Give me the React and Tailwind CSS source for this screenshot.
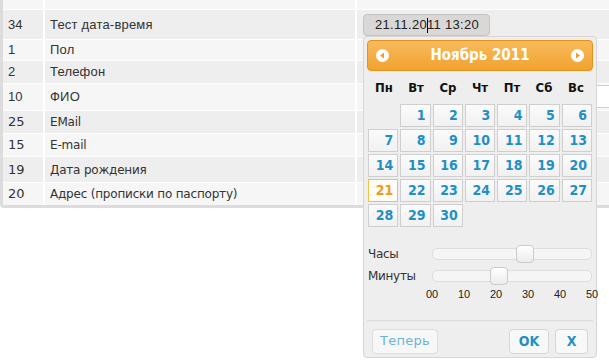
import React from 'react'

const rows = [
  { id: '', label: '', h: 'h-[9px]', bg: 'bg-[#f6f6f6]' },
  { id: '34', label: 'Тест дата-время', h: 'h-[29px]', bg: 'bg-[#eeeeee]', picker: true },
  { id: '1', label: 'Пол', h: 'h-[20px]', bg: 'bg-[#f6f6f6]' },
  { id: '2', label: 'Телефон', h: 'h-[22px]', bg: 'bg-[#eeeeee]' },
  { id: '10', label: 'ФИО', h: 'h-[26px]', bg: 'bg-[#f6f6f6]', input: true },
  { id: '25', label: 'EMail', h: 'h-[22px]', bg: 'bg-[#eeeeee]', alt: true },
  { id: '15', label: 'E-mail', h: 'h-[22px]', bg: 'bg-[#f6f6f6]', alt: true },
  { id: '19', label: 'Дата рождения', h: 'h-[25px]', bg: 'bg-[#eeeeee]', alt: true },
  { id: '20', label: 'Адрес (прописки по паспорту)', h: 'h-[22px]', bg: 'bg-[#f6f6f6]', alt: true },
]

const dayNames = ['Пн', 'Вт', 'Ср', 'Чт', 'Пт', 'Сб', 'Вс']
const days = [null, ...Array.from({ length: 30 }, (_, i) => i + 1)]

function Arrow({ dir }) {
  return (
    <svg width="13" height="13" viewBox="0 0 13 13">
      <circle cx="6.5" cy="6.5" r="6.5" fill="#fff" />
      {dir === 'left' ? (
        <polygon points="4,6.5 8,3.5 8,9.5" fill="#f0a030" />
      ) : (
        <polygon points="9,6.5 5,3.5 5,9.5" fill="#f0a030" />
      )}
    </svg>
  )
}

function Slider({ label, pos }) {
  return (
    <div className="flex items-center h-[17px]">
      <span className="w-[64px] text-[12px] text-[#333] font-['DejaVu_Sans',sans-serif] tracking-[-0.3px]">{label}</span>
      <div className="relative w-[160px] h-[12px] rounded-[5px] border border-[#dddddd] bg-[#f5f5f5]">
        <div
          className="absolute top-[-4px] w-[18px] h-[18px] rounded-[4px] border border-[#cccccc] bg-gradient-to-b from-[#ffffff] to-[#ececec]"
          style={{ left: pos }}
        />
      </div>
    </div>
  )
}

function DatePicker() {
  return (
    <div className="absolute left-0 top-[22px] z-10 w-[234px] h-[322px] rounded-[4px] border border-[#d6d6d6] bg-[#eeeeee] font-['DejaVu_Sans_Condensed','Liberation_Sans',sans-serif]">
      <div className="mx-[3px] mt-[3px] h-[31px] flex items-center justify-between px-[8px] rounded-[4px] border border-[#e3931a] bg-gradient-to-b from-[#f8bb5a] to-[#f2a22d]">
        <Arrow dir="left" />
        <span className="text-white font-bold text-[15px]">Ноябрь 2011</span>
        <Arrow dir="right" />
      </div>
      <div className="mx-[4px] grid grid-cols-7 h-[33px] items-center">
        {dayNames.map((d) => (
          <span key={d} className="text-center font-bold text-[13px] text-[#111]">{d}</span>
        ))}
      </div>
      <div className="mx-[4px] grid grid-cols-7 gap-[2px] auto-rows-[23px]">
        {days.map((d, i) =>
          d === null ? (
            <div key={i} />
          ) : d === 21 ? (
            <div key={i} className="border border-[#f5c33b] bg-[#fffdf6] text-right pr-[4px] leading-[21px] font-bold text-[14px] text-[#f0981c]">{d}</div>
          ) : (
            <div key={i} className="border border-[#cfcfcf] bg-gradient-to-b from-[#fbfbfb] to-[#f1f1f1] text-right pr-[4px] leading-[21px] font-bold text-[14px] text-[#1f8fc7]">{d}</div>
          )
        )}
      </div>
      <div className="mx-[4px] mt-[18px] flex flex-col gap-[5px]">
        <Slider label="Часы" pos={83} />
        <Slider label="Минуты" pos={57} />
      </div>
      <div className="flex ml-[52px] mt-[2px] text-[11px] text-[#222] font-['Liberation_Sans',sans-serif]">
        {['00', '10', '20', '30', '40', '50'].map((t) => (
          <span key={t} className="w-[32px] shrink-0 text-center">{t}</span>
        ))}
      </div>
      <div className="mx-[3px] mt-[17px] border-t border-[#dadada]" />
      <div className="flex items-center mt-[8px] px-[8px]">
        <button className="w-[66px] h-[25px] rounded-[4px] border border-[#dddddd] bg-[#f7f7f7] text-[13px] text-[#6bb5da] font-['DejaVu_Sans',sans-serif] tracking-[0.3px]">Теперь</button>
        <div className="flex-1" />
        <button className="w-[40px] h-[25px] rounded-[4px] border border-[#d6d6d6] bg-[#f8f8f8] text-[14px] font-bold text-[#1f8fc7]">OK</button>
        <button className="ml-[6px] w-[33px] h-[25px] rounded-[4px] border border-[#d6d6d6] bg-[#f8f8f8] text-[14px] font-bold text-[#1f8fc7]">X</button>
      </div>
    </div>
  )
}

export default function App() {
  return (
    <div className="w-[609px] h-[362px] bg-white overflow-hidden">
      <div className="flex flex-col gap-px bg-white border-l-[3px] border-b-[3px] border-[#dcdcdc] rounded-bl-[4px]">
        {rows.map((r, i) => (
          <div key={i} className={`flex gap-[2px] ${r.h}`}>
            <div className={`w-[40px] shrink-0 ${r.bg} pl-[5px] flex items-center text-[13px] text-[#333] ${r.alt ? "font-['DejaVu_Sans',sans-serif] text-[12px]" : "font-['Liberation_Sans',sans-serif]"}`}>
              {r.id}
            </div>
            <div className={`w-[310px] shrink-0 ${r.bg} pl-[5px] flex items-center text-[#333] ${r.alt ? "font-['DejaVu_Sans',sans-serif] text-[12px] tracking-[-0.2px]" : "font-['Liberation_Sans',sans-serif] text-[13px] tracking-[0.2px]"}`}>
              {r.label}
            </div>
            <div className={`flex-1 min-w-0 ${r.bg} pl-[6px] ${r.input ? 'overflow-hidden' : ''}`}>
              {r.picker && (
                <div className="relative mt-[4px] w-[127px]">
                  <div className="h-[22px] rounded-[4px] border border-[#c6c4c2] bg-[#dad8d6] pl-[11px] flex items-center text-[13px] text-[#222] font-['Liberation_Sans',sans-serif] tracking-[0.3px]">
                    21.11.20<span className="inline-block w-px h-[15px] bg-black -mx-[0.5px]" />11 13:20
                  </div>
                  <DatePicker />
                </div>
              )}
              {r.input && (
                <div className="mt-[1px] h-[23px] w-[260px] border border-[#cfcfcf] bg-white" />
              )}
            </div>
          </div>
        ))}
      </div>
    </div>
  )
}
